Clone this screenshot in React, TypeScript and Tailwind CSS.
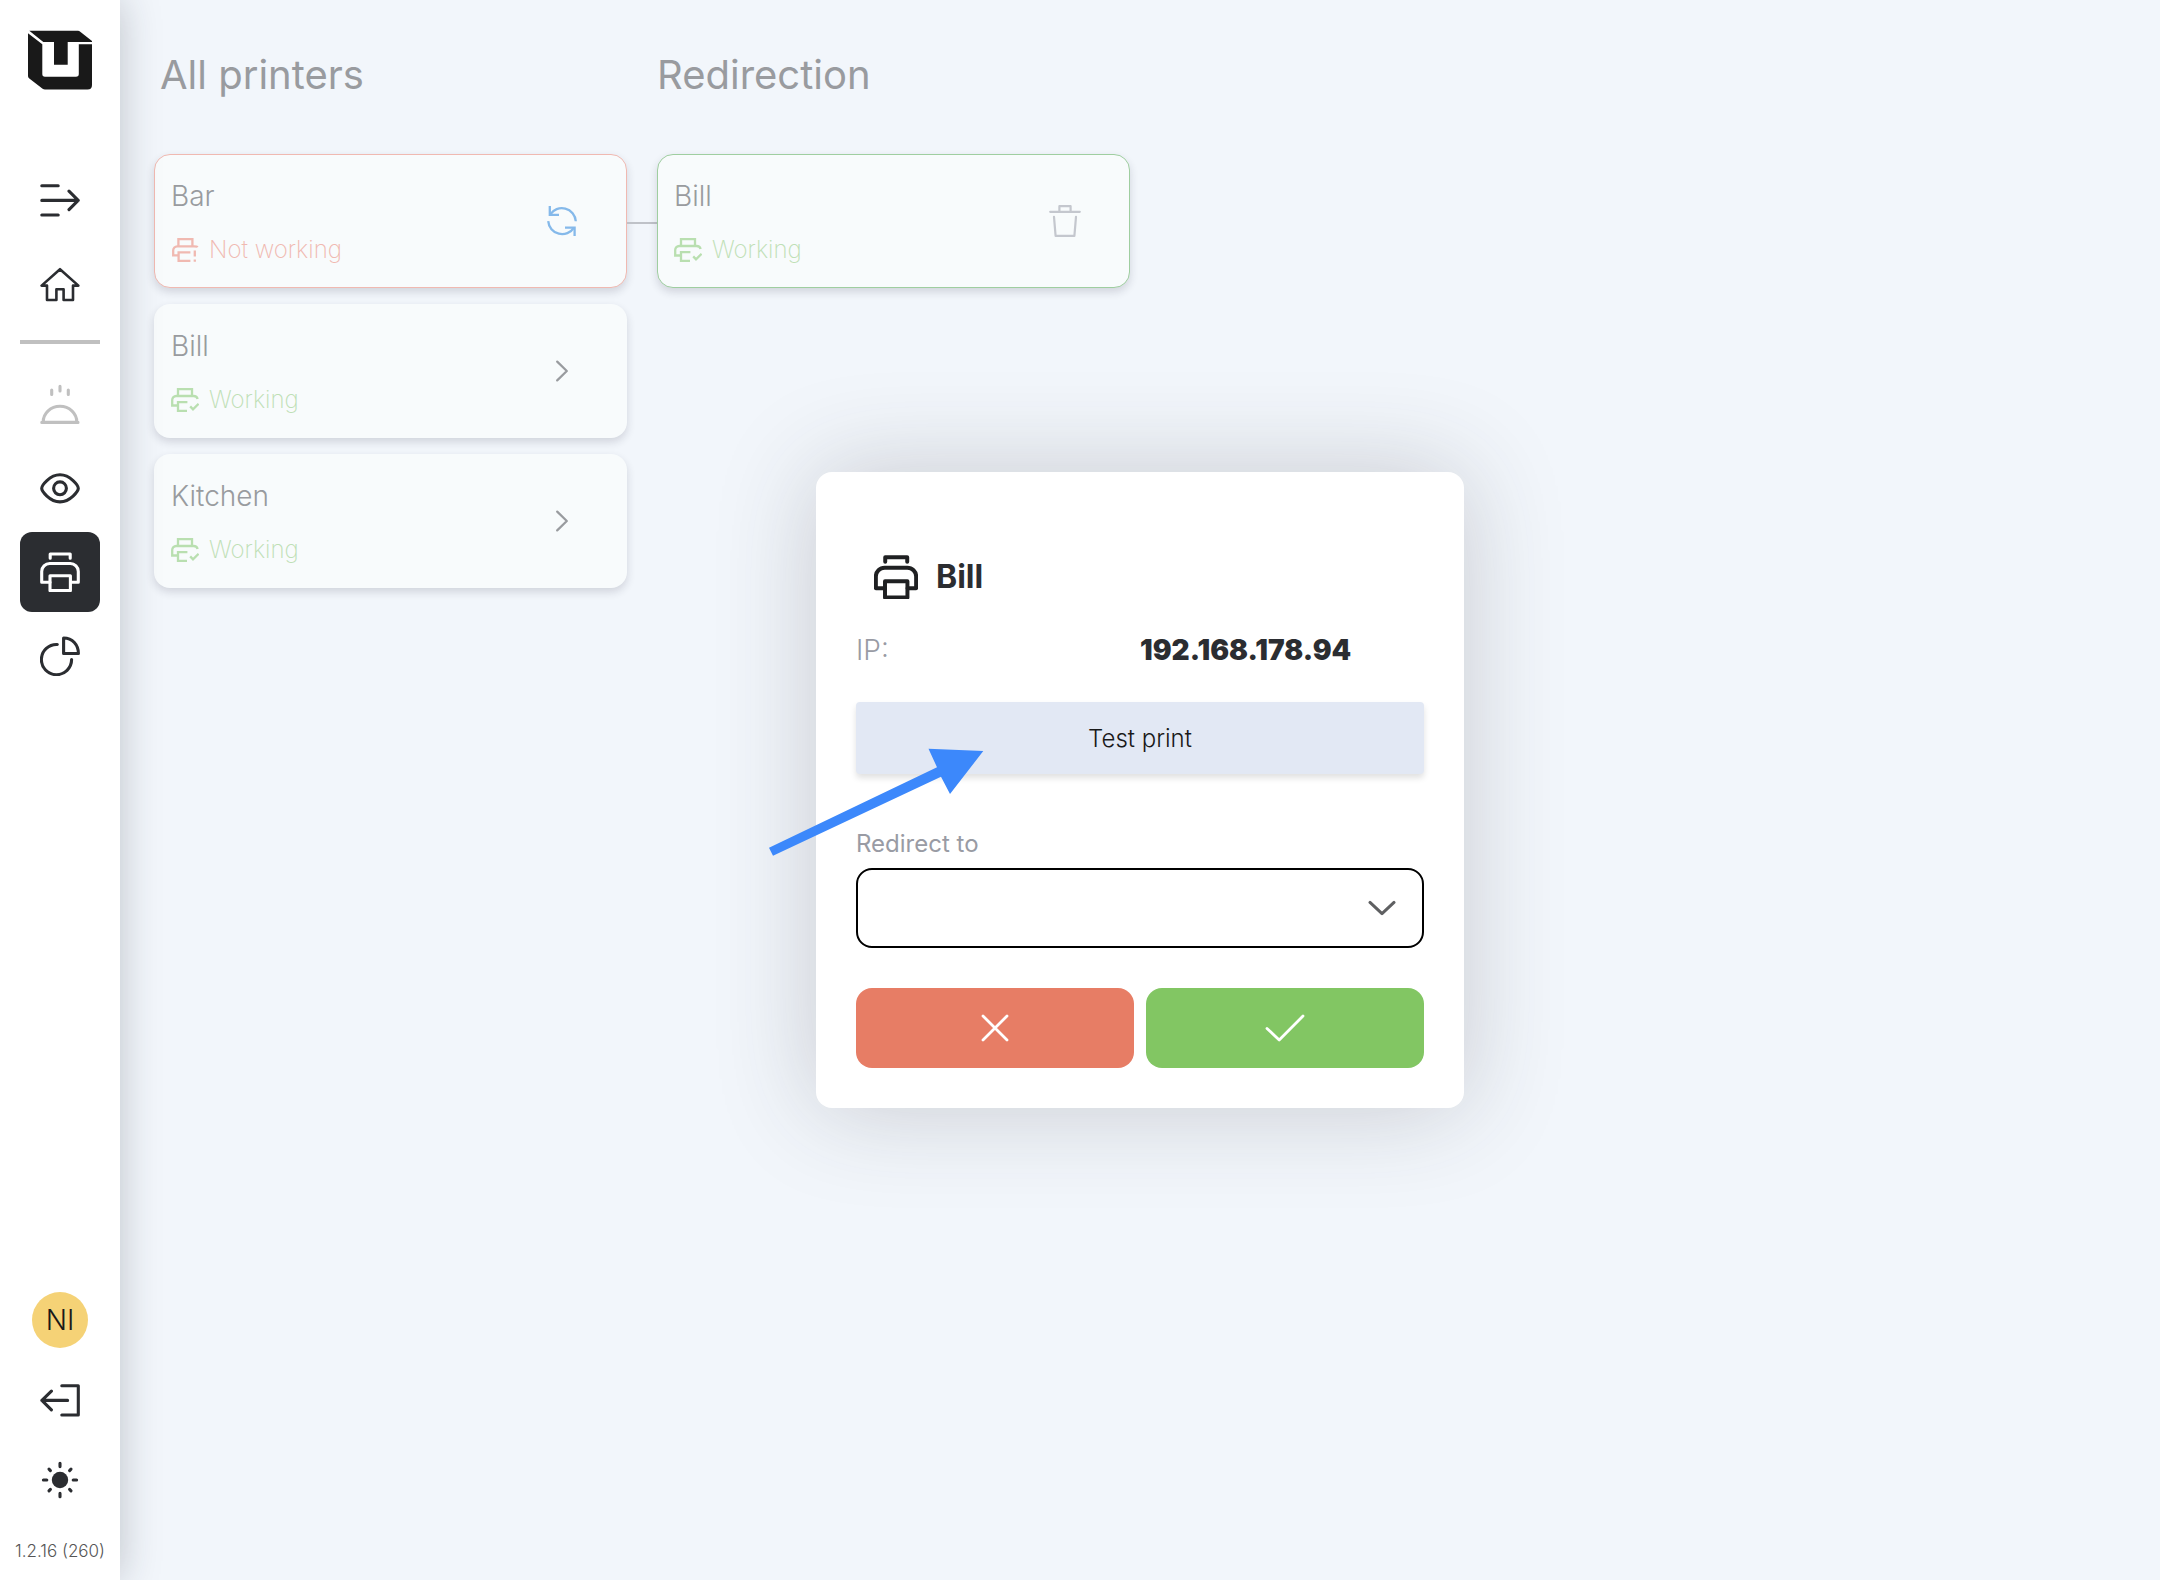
import React from 'react';

type IconProps = { className?: string };

const Logo = () => (
  <svg viewBox="0 0 64 60" className="h-[60px] w-16" fill="#191919">
    <path d="M1.3.7H50.2Q51 .7 51.6 1.2L64 11V12H39.7V34.7H26V12H15.3Z" />
    <path d="M0 3.3L14.3 14.2V44Q14.3 46.7 17 46.7H48Q50.8 46.7 50.8 44V14.3H64V55Q64 59.5 59.5 59.5H17Q15.6 59.5 14.6 58.7L1 48.2Q0 47.4 0 46Z" />
  </svg>
);

const NavIcon = ({ children, className = '' }: IconProps & { children: React.ReactNode }) => (
  <svg
    viewBox="0 0 40 40"
    className={`h-10 w-10 ${className}`}
    fill="none"
    stroke="currentColor"
    strokeWidth="3.1"
    strokeLinecap="round"
    strokeLinejoin="round"
  >
    {children}
  </svg>
);

const ExpandIcon = () => (
  <NavIcon>
    <path d="M1.8 5.8H18.2M1.8 20.4H38M1.8 35H18.2M29 11.2L38.2 20.4L29 29.6" />
  </NavIcon>
);

const HomeIcon = () => (
  <NavIcon>
    <path
      strokeWidth="2.6"
      d="M20 5.2L1.6 21.6H7V36H16.4V25.2H23.6V36H33V21.6H38.4Z"
    />
  </NavIcon>
);

const DishIcon = () => (
  <NavIcon className="text-[#c0c0c0]">
    <path d="M1.8 38.4H38M3.2 38A16.8 15.8 0 0 1 36.8 38M11.7 6V10.5M20 2.4V7M28.3 6V10.5" />
  </NavIcon>
);

const EyeIcon = () => (
  <NavIcon>
    <path d="M1.7 20.3C1.7 17.6 9.5 6.8 20 6.8S38.3 17.6 38.3 20.3S30.5 33.9 20 33.9S1.7 23 1.7 20.3Z" />
    <circle cx="20" cy="20.3" r="6.4" />
  </NavIcon>
);

const PrinterPaths = () => (
  <>
    <path d="M10.2 6.2V2H30.2V6.2" />
    <path d="M10 30.2H1.7V19.5A8 8 0 0 1 9.7 11.5H30.3A8 8 0 0 1 38.3 19.5V30.2H30.5" />
    <path d="M10 23.8H30.4V38.6H10Z" />
  </>
);

const PrinterIcon = () => (
  <NavIcon>
    <PrinterPaths />
  </NavIcon>
);

const PieIcon = () => (
  <NavIcon>
    <path d="M17.3 8.5A15.1 15.1 0 1 0 31.6 23.6" />
    <path d="M23.6 2V17.5H38.4C38.4 9 32.5 2 23.6 2Z" />
  </NavIcon>
);

const LogoutIcon = () => (
  <NavIcon>
    <path d="M21.8 5.8H38.3V35H21.8M27.6 20.4H2M11.4 11.2L1.9 20.4L11.4 29.8" />
  </NavIcon>
);

const SunIcon = () => (
  <NavIcon>
    <circle cx="20" cy="20" r="8.2" fill="currentColor" stroke="none" />
    <path d="M20 3.2V6.6M20 33.4V36.8M3.4 20H6.8M33.2 20H36.6M9 9.2L10.4 10.6M31 9.2L29.6 10.6M9 30.8L10.4 29.4M31 30.8L29.6 29.4" />
  </NavIcon>
);

const PrinterOkIcon = () => (
  <svg viewBox="0 0 28 24" className="h-6 w-7" fill="none" stroke="#b9dfb0" strokeWidth="2.3">
    <path d="M7 8V1.1H21V8M6.8 17.5H1.2V12A4 4 0 0 1 5.2 8H22.5Q26 8 26.6 11" />
    <path d="M16.4 14.2H7V22.9H16M19.2 18.4L22 21.4L27.6 15.8" />
  </svg>
);

const PrinterErrorIcon = () => (
  <svg viewBox="0 0 28 24" className="h-6 w-7" fill="none" stroke="#f0b9b1" strokeWidth="2.3">
    <path d="M7.4 8V1.1H21.4V8M7.4 17.3H2.2V12.3A4 4 0 0 1 6.2 8.3H23Q26 8.3 26.8 9" />
    <path d="M19.4 14.4H7.6V22.9H19.4M23.8 12.4V18.4M23.8 21.6V23.8" />
  </svg>
);

const RefreshIcon = () => (
  <svg viewBox="0 0 30 30" className="h-[30px] w-[30px]" fill="none" stroke="#85b9ea" strokeWidth="2.3">
    <path d="M3 8.6A14 14 0 0 1 28.8 15.2M1.2 15.2A14 14 0 0 0 27 21.6" />
    <path d="M2.8 0V8.8H12M18 21.6H27.6V30.4" />
  </svg>
);

const TrashIcon = () => (
  <svg
    viewBox="0 0 32 32"
    className="h-8 w-8"
    fill="none"
    stroke="#c4c7ce"
    strokeWidth="2.2"
    strokeLinecap="round"
    strokeLinejoin="round"
  >
    <path d="M1.2 6.8H30.8M10.4 6.4V1.2H21.6V6.4M5 11.8L6.6 30.8H25.4L27 11.8" />
  </svg>
);

const ChevronRight = () => (
  <svg
    viewBox="0 0 12 22"
    className="h-[22px] w-3"
    fill="none"
    stroke="#999b9f"
    strokeWidth="2.2"
    strokeLinecap="round"
    strokeLinejoin="round"
  >
    <path d="M1.2 1.6L10.8 11L1.2 20.4" />
  </svg>
);

type NavButtonProps = { label: string; active?: boolean; children: React.ReactNode };

const NavButton = ({ label, active, children }: NavButtonProps) => (
  <button
    type="button"
    aria-label={label}
    className={`flex h-20 w-20 items-center justify-center rounded-xl ${
      active ? 'bg-[#2b2d31] text-white' : 'text-[#2b2d31]'
    }`}
  >
    {children}
  </button>
);

const Sidebar = () => (
  <aside className="z-10 flex w-[120px] shrink-0 flex-col items-center bg-white shadow-[0_0_40px_rgba(30,40,50,0.25)]">
    <div className="flex h-40 flex-col pt-[30px]">
      <Logo />
    </div>
    <nav className="flex flex-col gap-1">
      <NavButton label="Expand menu"><ExpandIcon /></NavButton>
      <NavButton label="Home"><HomeIcon /></NavButton>
      <hr className="mt-3 mb-4 h-1 border-0 bg-[#c0c0c0]" />
      <NavButton label="Orders"><DishIcon /></NavButton>
      <NavButton label="Overview"><EyeIcon /></NavButton>
      <NavButton label="Printers" active><PrinterIcon /></NavButton>
      <NavButton label="Reports"><PieIcon /></NavButton>
    </nav>
    <div className="mt-auto flex flex-col items-center">
      <div className="flex h-20 items-center">
        <button type="button" className="h-14 w-14 rounded-full bg-[#f5d276] text-[28px] font-light text-[#191919]">
          NI
        </button>
      </div>
      <NavButton label="Log out"><LogoutIcon /></NavButton>
      <NavButton label="Light mode"><SunIcon /></NavButton>
      <p className="h-[60px] pt-[19px] text-[17px] leading-6 font-light whitespace-nowrap text-[#555]">1.2.16 (260)</p>
    </div>
  </aside>
);

type PrinterCardProps = {
  name: string;
  ok?: boolean;
  outline?: string;
  action: string;
  icon: React.ReactNode;
};

const PrinterCard = ({ name, ok = true, outline = 'border-transparent', action, icon }: PrinterCardProps) => (
  <article
    className={`flex h-[134px] w-[473px] items-center justify-between rounded-2xl border bg-[#f8fbfc] bg-clip-border pr-8 pl-4 shadow-[0_4px_8px_rgba(40,40,60,0.16)] ${outline}`}
  >
    <div className="flex flex-col gap-5 pt-[2px]">
      <h2 className="text-[28px] leading-9 font-light text-[#999b9f]">{name}</h2>
      {ok ? (
        <p className="flex items-center gap-[10px] text-[24px] leading-8 font-extralight text-[#bfe0b6]">
          <PrinterOkIcon />
          Working
        </p>
      ) : (
        <p className="flex items-center gap-[10px] text-[24px] leading-8 font-extralight text-[#f0b9b1]">
          <PrinterErrorIcon />
          Not working
        </p>
      )}
    </div>
    <button type="button" aria-label={action} className="flex h-16 w-16 items-center justify-center">
      {icon}
    </button>
  </article>
);

const PrinterDialog = () => (
  <div role="dialog" aria-labelledby="printer-name" className="relative w-[648px] rounded-2xl bg-white px-10 pt-20 pb-10 shadow-[0_0_100px_rgba(50,50,60,0.22)]">
    <header className="flex h-[50px] items-center gap-[18px] pl-[18px]">
      <svg
        viewBox="0 0 40 40"
        className="h-11 w-11"
        fill="none"
        stroke="#1f2022"
        strokeWidth="3.6"
        strokeLinecap="round"
        strokeLinejoin="round"
      >
        <PrinterPaths />
      </svg>
      <h1 id="printer-name" className="text-[32px] leading-10 font-bold text-[#2b2d31]">Bill</h1>
    </header>
    <dl className="mt-7 grid grid-cols-2 text-[28px] leading-10">
      <dt className="font-light text-[#999ba4]">IP:</dt>
      <dd className="font-black text-[#2b2d31]">192.168.178.94</dd>
    </dl>
    <button
      type="button"
      className="mt-8 h-[72px] w-full rounded-sm bg-[#e2e8f4] pt-[2px] text-[24px] font-light text-[#191919] shadow-[0_4px_6px_rgba(0,0,0,0.12)]"
    >
      Test print
    </button>
    <label htmlFor="redirect" className="mt-[54px] block text-[24px] leading-8 text-[#999ba4]">
      Redirect to
    </label>
    <div className="relative mt-2">
      <select id="redirect" className="block h-20 w-full appearance-none rounded-2xl border-2 border-black bg-white px-6 text-[24px]">
        <option value="" />
      </select>
      <svg
        viewBox="0 0 28 16"
        className="pointer-events-none absolute top-8 right-7 h-4 w-7"
        fill="none"
        stroke="#5f6062"
        strokeWidth="3"
        strokeLinecap="round"
        strokeLinejoin="round"
      >
        <path d="M2 2.4L14 13.6L26 2.4" />
      </svg>
    </div>
    <div className="mt-10 grid grid-cols-2 gap-3">
      <button type="button" aria-label="Cancel" className="flex h-20 items-center justify-center rounded-2xl bg-[#e77d65]">
        <svg viewBox="0 0 28 28" className="h-7 w-7" fill="none" stroke="#fff" strokeWidth="2.8" strokeLinecap="round">
          <path d="M2 2L26 26M26 2L2 26" />
        </svg>
      </button>
      <button type="button" aria-label="Confirm" className="flex h-20 items-center justify-center rounded-2xl bg-[#82c663]">
        <svg
          viewBox="0 0 40 28"
          className="h-7 w-10"
          fill="none"
          stroke="#fff"
          strokeWidth="2.8"
          strokeLinecap="round"
          strokeLinejoin="round"
        >
          <path d="M2 14.4L14.2 26L38 2" />
        </svg>
      </button>
    </div>
    <svg viewBox="0 0 216 108" className="pointer-events-none absolute top-[276px] -left-12 h-[108px] w-[216px]" fill="#3c88fb">
      <path d="M1 99.7L169 19.3L160.5.7L215.3 3L182 46L173 28.7L5 107.7Z" />
    </svg>
  </div>
);

const App = () => (
  <div className="flex min-h-screen bg-[#f2f6fb] font-['Inter',sans-serif]">
    <Sidebar />
    <main className="relative flex-1 pt-12 pl-[34px]">
      <div className="flex">
        <section>
          <h1 className="mb-[50px] pl-[6px] text-[40px] leading-[54px] text-[#999b9f]">All printers</h1>
          <div className="flex flex-col gap-4 pt-[2px]">
            <div className="flex items-center">
              <PrinterCard name="Bar" ok={false} outline="border-[#f0b9b1]" action="Retry" icon={<RefreshIcon />} />
              <div className="mt-1 h-[2px] w-[30px] bg-[#bfc2c8]" />
            </div>
            <PrinterCard name="Bill" action="Open Bill" icon={<ChevronRight />} />
            <PrinterCard name="Kitchen" action="Open Kitchen" icon={<ChevronRight />} />
          </div>
        </section>
        <section>
          <h1 className="mb-[50px] text-[40px] leading-[54px] text-[#999b9f]">Redirection</h1>
          <div className="pt-[2px]">
            <PrinterCard name="Bill" outline="border-[#9fcea0]" action="Remove redirection" icon={<TrashIcon />} />
          </div>
        </section>
      </div>
      <div className="absolute inset-0 flex items-center justify-center">
        <PrinterDialog />
      </div>
    </main>
  </div>
);

export default App;
